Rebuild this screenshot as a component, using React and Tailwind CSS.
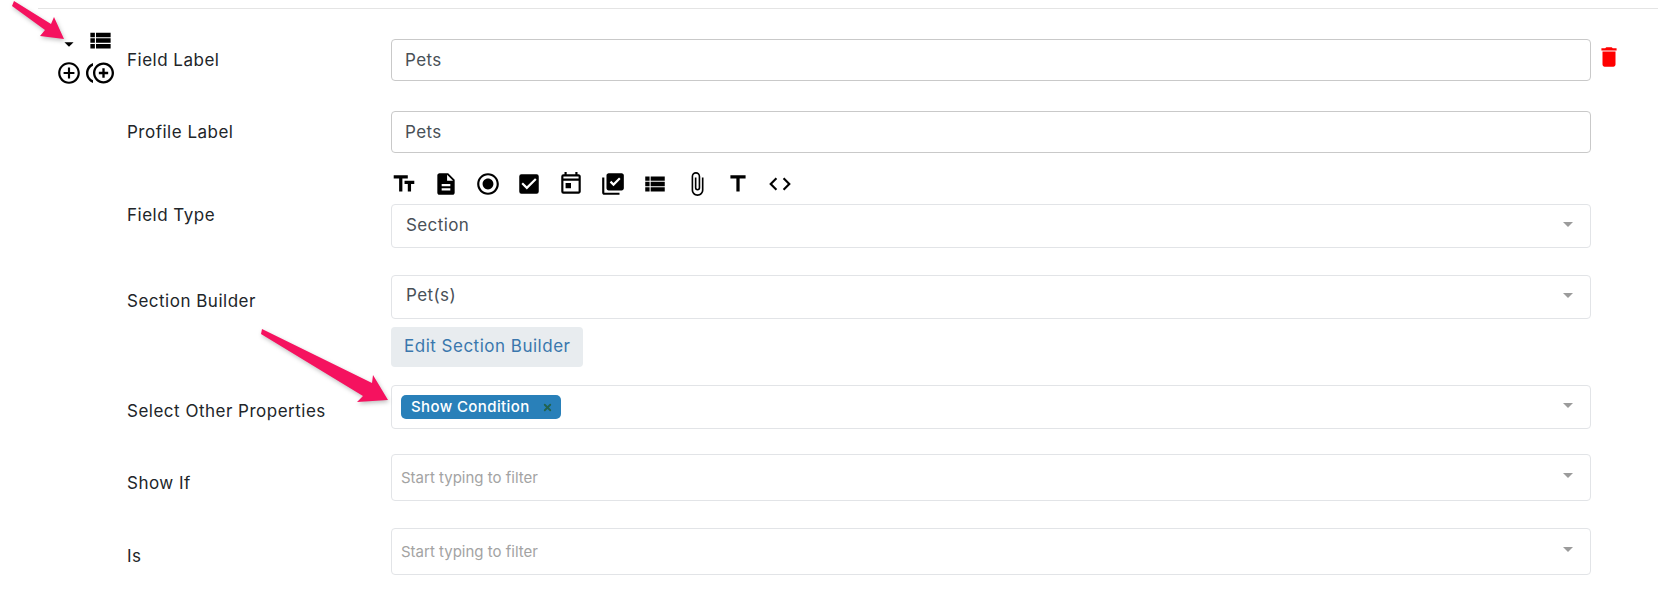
import React from "react";
import { X } from "lucide-react";
import {
  MdArrowDropDown,
  MdAttachFile,
  MdCheckBox,
  MdCode,
  MdControlPoint,
  MdControlPointDuplicate,
  MdDelete,
  MdDescription,
  MdLibraryAddCheck,
  MdOutlineToday,
  MdRadioButtonChecked,
  MdTextFields,
  MdTitle,
  MdViewList,
} from "react-icons/md";

const fieldTypeIcons = [
  MdTextFields,
  MdDescription,
  MdRadioButtonChecked,
  MdCheckBox,
  MdOutlineToday,
  MdLibraryAddCheck,
  MdViewList,
  MdAttachFile,
  MdTitle,
  MdCode,
];

const Arrow = ({ className, viewBox, points }) => (
  <svg className={`absolute drop-shadow-[1px_2px_2px_rgba(0,0,0,0.25)] ${className}`} viewBox={viewBox} fill="#f5125f">
    <polygon points={points} />
  </svg>
);

const Row = ({ label, labelClass = "", className = "", children }) => (
  <div className={`flex ${className}`}>
    <div className={`w-[264px] shrink-0 text-[17px] tracking-[0.5px] text-[#212529] ${labelClass}`}>{label}</div>
    <div className="w-[1200px] shrink-0">{children}</div>
  </div>
);

const TextBox = ({ value }) => (
  <div className="flex h-[42px] items-center rounded border border-[#c9c9c9] bg-white px-[13px] pt-[2px] text-[17px] tracking-[0.4px] text-[#495057]">
    {value}
  </div>
);

const Select = ({ value, placeholder, height = "h-[44px]", valueClass = "", children }) => (
  <div className={`flex ${height} items-center justify-between rounded border border-[#e2e4e7] bg-white pl-[14px] pr-[17px] text-[17px] tracking-[0.4px] text-[#495057]`}>
    {value && <span className={valueClass}>{value}</span>}
    {placeholder && <span className="-ml-[5px] pt-[2px] text-[15px] tracking-normal text-[#a3a3a3]">{placeholder}</span>}
    {children}
    <span className="mb-[4px] h-0 w-0 border-x-[5px] border-t-[5px] border-x-transparent border-t-[#9b9b9b]" />
  </div>
);

export default function App() {
  return (
    <div className="relative h-[594px] w-[1658px] overflow-hidden bg-white pl-[127px] pt-[8px] font-['Inter',sans-serif]">
      <Arrow
        className="left-[10px] top-0 h-[45px] w-[60px]"
        viewBox="0 0 60 45"
        points="4,1 41,24 44,17 54,39 30,36 35,30 2,6"
      />
      <Arrow
        className="left-[255px] top-[325px] h-[85px] w-[140px]"
        viewBox="0 0 140 85"
        points="7,4 117,58 118,50 133,75 102,77 108,71 6,9"
      />

      <div className="-ml-[89px] h-px w-[1620px] bg-[#e4e4e4]" />

      <div className="relative mt-[30px] flex">
        <div className="absolute -left-[73px] -top-[12px] w-[60px]">
          <div className="flex h-[27px] items-center justify-between pl-[4px]">
            <MdArrowDropDown className="mt-[6px] size-[22px] text-black" />
            <MdViewList className="size-[27px] text-black" />
          </div>
          <div className="mt-[5px] flex h-[28px] items-center justify-between pl-[2px]">
            <MdControlPoint className="size-[26px] text-black" />
            <MdControlPointDuplicate className="size-[28px] text-black" />
          </div>
        </div>
        <Row label="Field Label" labelClass="pt-[9px]">
          <TextBox value="Pets" />
        </Row>
        <MdDelete className="ml-[5px] mt-[5px] size-[26px] text-[#ff0000]" />
      </div>

      <Row label="Profile Label" labelClass="pt-[9px]" className="mt-[30px]">
        <TextBox value="Pets" />
      </Row>

      <Row label="Field Type" labelClass="pt-[30px]" className="mt-[20px]">
        <div className="mb-[9px] flex h-[22px] items-center gap-[15.8px] text-black">
          {fieldTypeIcons.map((Icon, i) => (
            <Icon key={i} className="size-[26px] shrink-0" />
          ))}
        </div>
        <Select value="Section" />
      </Row>

      <Row label="Section Builder" labelClass="pt-[14px]" className="mt-[27px]">
        <Select value="Pet(s)" valueClass="pb-[3px]" />
        <button className="mt-[8px] h-[40px] rounded bg-[#e8ecef] px-[13px] text-[17px] tracking-[0.5px] text-[#3a77ad]">
          Edit Section Builder
        </button>
      </Row>

      <Row label="Select Other Properties" labelClass="pt-[14px]" className="mt-[18px]">
        <Select>
          <span className="-ml-[5px] flex h-[24px] items-center rounded-[5px] bg-[#2980b9] pl-[10px] pr-[8px] text-[15px] font-medium tracking-[0.4px] text-white">
            Show Condition
            <X className="ml-[12px] size-[11px] text-[#22634f]" strokeWidth={4} />
          </span>
          <span className="flex-1" />
        </Select>
      </Row>

      <Row label="Show If" labelClass="pt-[17px]" className="mt-[25px]">
        <Select placeholder="Start typing to filter" height="h-[47px]" />
      </Row>

      <Row label="Is" labelClass="pt-[16px]" className="mt-[27px]">
        <Select placeholder="Start typing to filter" height="h-[47px]" />
      </Row>
    </div>
  );
}
